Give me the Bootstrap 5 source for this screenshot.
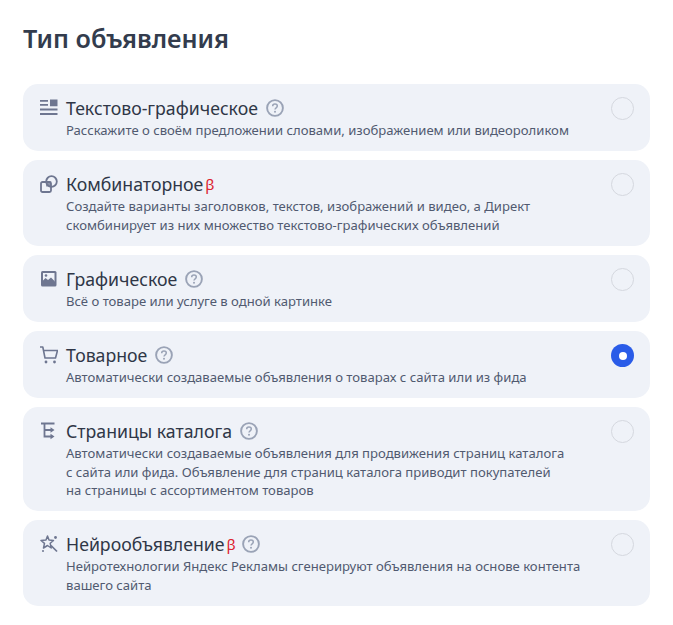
<!DOCTYPE html>
<html lang="ru">
<head>
<meta charset="utf-8">
<title>Тип объявления</title>
<link href="https://cdn.jsdelivr.net/npm/bootstrap@5.3.0/dist/css/bootstrap.min.css" rel="stylesheet">
<style>
body { background:#fff; font-family:"Noto Sans","Open Sans",sans-serif; color:#2f3747; }
.page-wrap { padding:20px 23px 0 23px; }
.page-head { font-size:25.2px; line-height:36px; font-weight:600; margin:0 0 28px; color:#333c4d; }
.type-list { gap:9.2px; }
.type-item { background:#eff2f8; border-radius:15px; padding:12px 16px 11.5px 17px; }
.type-ico { width:26px; flex:none; height:24px; color:#6e7690; }
.type-ico svg { display:block; width:18px; height:18px; margin-top:3px; }
.type-title { font-size:17.7px; line-height:24px; color:#2f3747; }
.type-desc { font-size:13.1px; line-height:18.5px; color:#515a70; padding-top:1px; }
.beta { color:#dc2430; font-size:15px; margin-left:2px; }
.qmark { width:18px; height:18px; flex:none; margin-left:8px; }
.beta + .qmark { margin-left:6px; }
.title-row { height:24px; }
.pick { width:23px; height:23px; flex:none; border-radius:50%; border:1px solid #d5d8df; margin-left:20px; margin-top:1px; }
.pick-on { background:#2a5ce8; border:none; }
.pick-on::after { content:""; width:8px; height:8px; background:#fff; border-radius:50%; }
</style>
</head>
<body>
<svg width="0" height="0" class="d-block position-absolute">
<symbol id="q" viewBox="0 0 18 18"><circle cx="9" cy="9" r="7.900" fill="none" stroke="#9aa3b6" stroke-width="1.900"/><path d="M6.700 7.200c0-1.300 1-2.100 2.300-2.100s2.300.8 2.300 2c0 1.800-2.300 1.700-2.300 3.500" fill="none" stroke="#9aa3b6" stroke-width="1.500"/><circle cx="9" cy="12.800" r="1" fill="#9aa3b6"/></symbol>
</svg>
<div class="page-wrap">
<h1 class="page-head">Тип объявления</h1>
<div class="d-flex flex-column type-list">

<div class="d-flex align-items-start type-item">
<div class="type-ico"><svg viewBox="0 0 18 18"><path fill="currentColor" d="M0 1h8v1.800H0zM0 5h8v1.800H0zM10 .5h7.500v6.800H10zM0 9.500h17.500v2H0zM0 14h17.500v2H0z"/></svg></div>
<div class="flex-grow-1"><div class="d-flex align-items-center title-row type-title">Текстово-графическое<svg class="qmark"><use href="#q"/></svg></div>
<div class="type-desc">Расскажите о своём предложении словами, изображением или видеороликом</div></div>
<div class="pick"></div>
</div>

<div class="d-flex align-items-start type-item">
<div class="type-ico"><svg viewBox="0 0 18 18"><rect x="1" y="7" width="10" height="10" rx="1.500" fill="none" stroke="currentColor" stroke-width="1.800"/><path fill="currentColor" d="M6 6.500h5v5H6z" opacity=".75"/><circle cx="11.500" cy="6.500" r="5.300" fill="none" stroke="currentColor" stroke-width="1.800"/></svg></div>
<div class="flex-grow-1"><div class="d-flex align-items-center title-row type-title">Комбинаторное<span class="beta">β</span></div>
<div class="type-desc">Создайте варианты заголовков, текстов, изображений и видео, а Директ<br>скомбинирует из них множество текстово-графических объявлений</div></div>
<div class="pick"></div>
</div>

<div class="d-flex align-items-start type-item">
<div class="type-ico"><svg viewBox="0 0 18 18"><rect x="1" y="1" width="15.500" height="15.500" rx="1.500" fill="currentColor"/><rect x="3" y="3" width="11.500" height="8.500" fill="#eff2f8"/><path fill="currentColor" d="M3 10.500l2.500-2.500 2.500 2 3-2.500 3.500 3.500v3H3z"/><circle cx="6" cy="5.500" r="1.300" fill="currentColor"/></svg></div>
<div class="flex-grow-1"><div class="d-flex align-items-center title-row type-title">Графическое<svg class="qmark"><use href="#q"/></svg></div>
<div class="type-desc">Всё о товаре или услуге в одной картинке</div></div>
<div class="pick"></div>
</div>

<div class="d-flex align-items-start type-item">
<div class="type-ico"><svg viewBox="0 0 18 18"><path fill="none" stroke="currentColor" stroke-width="1.600" stroke-linejoin="round" d="M0 1h2.800l2.200 11h10.500l2-7.500H3.800"/><circle cx="6" cy="16" r="1.400" fill="currentColor"/><circle cx="14.500" cy="16" r="1.400" fill="currentColor"/></svg></div>
<div class="flex-grow-1"><div class="d-flex align-items-center title-row type-title">Товарное<svg class="qmark"><use href="#q"/></svg></div>
<div class="type-desc">Автоматически создаваемые объявления о товарах с сайта или из фида</div></div>
<div class="pick pick-on d-flex align-items-center justify-content-center"></div>
</div>

<div class="d-flex align-items-start type-item">
<div class="type-ico"><svg viewBox="0 0 18 18"><path fill="none" stroke="currentColor" stroke-width="1.800" d="M1 1.500h13.500M4.500 1.500v13h7M4.500 8h7"/><path fill="currentColor" d="M10.500 5.200l4 2.800-4 2.800zM10.500 11.700l4 2.800-4 2.800z"/></svg></div>
<div class="flex-grow-1"><div class="d-flex align-items-center title-row type-title">Страницы каталога<svg class="qmark"><use href="#q"/></svg></div>
<div class="type-desc">Автоматически создаваемые объявления для продвижения страниц каталога<br>с сайта или фида. Объявление для страниц каталога приводит покупателей<br>на страницы с ассортиментом товаров</div></div>
<div class="pick"></div>
</div>

<div class="d-flex align-items-start type-item">
<div class="type-ico"><svg viewBox="0 0 18 18"><path fill="none" stroke="currentColor" stroke-width="1.500" stroke-linejoin="round" d="M7.500 1l1.500 4 4.500.5-3.300 2.800 1 4.700-3.700-2.500-4 2.500 1-4.700L1 5.500 6 5z"/><path stroke="currentColor" stroke-width="1.700" d="M11 10.500l6 6"/><circle cx="15.500" cy="2.500" r="1.400" fill="currentColor"/><circle cx="3" cy="16" r="1" fill="currentColor"/></svg></div>
<div class="flex-grow-1"><div class="d-flex align-items-center title-row type-title">Нейрообъявление<span class="beta">β</span><svg class="qmark"><use href="#q"/></svg></div>
<div class="type-desc">Нейротехнологии Яндекс Рекламы сгенерируют объявления на основе контента<br>вашего сайта</div></div>
<div class="pick"></div>
</div>

</div>
</div>
</body>
</html>
